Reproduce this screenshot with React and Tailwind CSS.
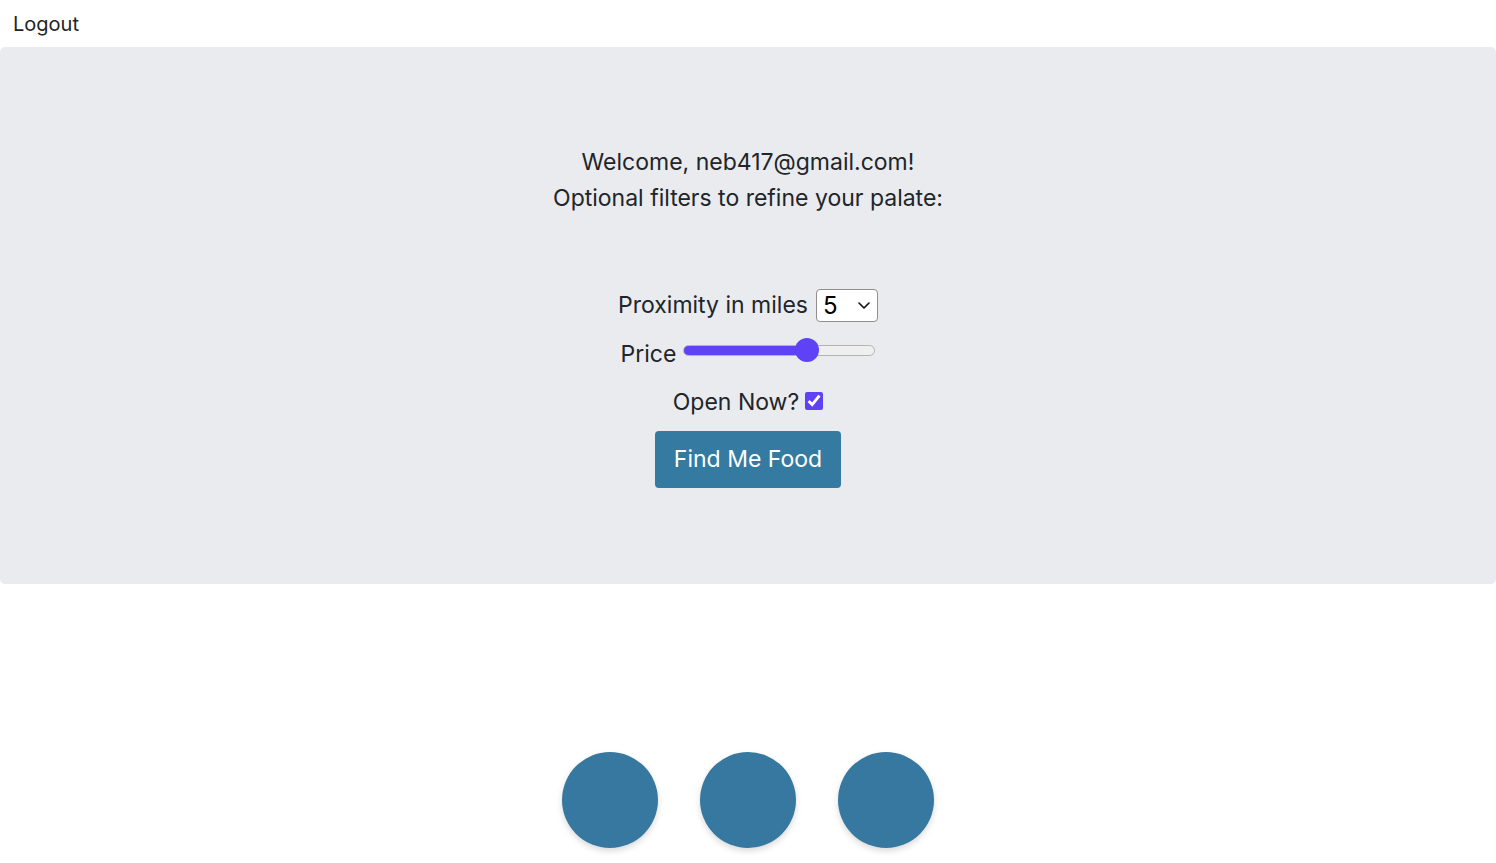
export default function App() {
  return (
    <div className="min-h-[863px] bg-white text-[#212529]" style={{ fontFamily: 'Inter, "Noto Sans", sans-serif' }}>
      <div className="h-[47px] px-[13px] pt-[10px] text-[20px] leading-[28px]">Logout</div>
      <div className="h-[537px] rounded-[5px] bg-[#e9ebef] flex flex-col items-center pt-[97px]">
        <div className="text-[23px] leading-[36px] text-center">
          <div>Welcome, neb417@gmail.com!</div>
          <div>Optional filters to refine your palate:</div>
        </div>
        <div className="mt-[72px] flex items-center gap-[8px] text-[23px]">
          <span>Proximity in miles</span>
          <div className="relative">
            <select defaultValue="5" className="block h-[33px] w-[62px] appearance-none rounded-[4px] border border-[#8f8f8f] bg-white pl-[6px] text-[24px] leading-[31px] text-black outline-none">
              <option>1</option>
              <option>5</option>
              <option>10</option>
              <option>25</option>
            </select>
            <svg className="pointer-events-none absolute right-[8px] top-[13px]" width="12" height="7" viewBox="0 0 12 7" fill="none">
              <path d="M1 1l5 5 5-5" stroke="#111" strokeWidth="1.6" strokeLinecap="round" strokeLinejoin="round" />
            </svg>
          </div>
        </div>
        <div className="mt-[13px] flex items-center gap-[7px] text-[23px] leading-[36px]">
          <span>Price</span>
          <input
            type="range"
            min="1"
            max="4"
            defaultValue="3"
            className="-mt-[7px] h-[11px] w-[192px] appearance-none rounded-full border border-[#b3b3b3] bg-[linear-gradient(to_right,#5f41f6_64%,#efefef_64%)] outline-none [&::-webkit-slider-thumb]:h-[24px] [&::-webkit-slider-thumb]:w-[24px] [&::-webkit-slider-thumb]:appearance-none [&::-webkit-slider-thumb]:rounded-full [&::-webkit-slider-thumb]:bg-[#5f41f6]"
          />
        </div>
        <div className="mt-[12px] flex items-center gap-[6px] text-[23px] leading-[36px]">
          <span>Open Now?</span>
          <input type="checkbox" defaultChecked className="h-[18px] w-[18px] accent-[#5f41f6] -mt-[2px]" />
        </div>
        <button className="mt-[11px] h-[57px] rounded-[4px] bg-[#357aa0] px-[19px] text-[23px] text-white">Find Me Food</button>
      </div>
      <div className="mt-[168px] flex justify-center gap-[42px]">
        <div className="h-[96px] w-[96px] rounded-full bg-[#36789f] shadow-[0_3px_6px_rgba(0,0,0,0.15)]" />
        <div className="h-[96px] w-[96px] rounded-full bg-[#36789f] shadow-[0_3px_6px_rgba(0,0,0,0.15)]" />
        <div className="h-[96px] w-[96px] rounded-full bg-[#36789f] shadow-[0_3px_6px_rgba(0,0,0,0.15)]" />
      </div>
    </div>
  );
}
